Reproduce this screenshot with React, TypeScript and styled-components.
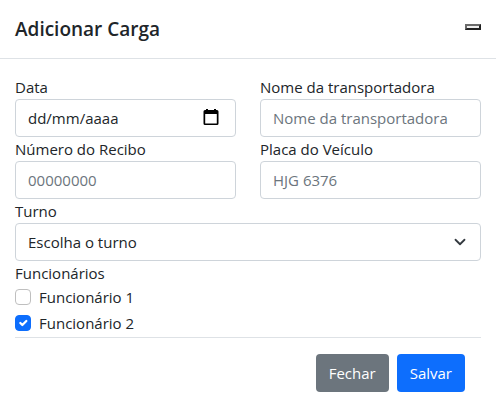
import React, { useState } from "react";
import styled, { createGlobalStyle, css } from "styled-components";

const GlobalStyle = createGlobalStyle`
  *, *::before, *::after { box-sizing: border-box; }
  body {
    margin: 0;
    background: #fff;
    color: #212529;
    font-family: "Open Sans", "Noto Sans", sans-serif;
    font-size: 15px;
    line-height: 24px;
  }
  button, input, select { font: inherit; color: inherit; margin: 0; }
`;

const Header = styled.header`
  display: flex;
  align-items: center;
  justify-content: space-between;
  padding: 14px 15px;
  border-bottom: 1px solid #dee2e6;
`;

const Title = styled.h5`
  margin: 0;
  font-size: 19px;
  font-weight: 600;
  line-height: 30px;
`;

const CloseButton = styled.button`
  width: 16px;
  height: 6px;
  padding: 0;
  background: #efefef;
  border: 2px solid;
  border-color: #6b6b6b #212121 #212121 #6b6b6b;
  margin-bottom: 4px;
`;

const Form = styled.form`
  padding: 16px 15px;
`;

const Fields = styled.div`
  display: grid;
  grid-template-columns: 1fr 1fr;
  column-gap: 24px;
`;

const Field = styled.div<{ $wide?: boolean }>`
  display: flex;
  flex-direction: column;
  min-width: 0;
  ${(p) => p.$wide && "grid-column: 1 / -1;"}
`;

const control = css`
  width: 100%;
  height: 38px;
  padding: 6px 12px;
  background: #fff;
  border: 1px solid #ced4da;
  border-radius: 4px;
  outline: none;
  &:focus-visible { border-color: #86b7fe; }
`;

const Input = styled.input<{ $dark?: boolean }>`
  ${control}
  &::placeholder { color: ${(p) => (p.$dark ? "#212529" : "#6c757d")}; opacity: 1; }
`;

const Select = styled.select`
  ${control}
  appearance: none;
`;

const ControlWrap = styled.div`
  display: grid;
  align-items: center;
  & > * { grid-area: 1 / 1; }
`;

const PickerButton = styled.button`
  display: flex;
  justify-self: end;
  padding: 0;
  margin-right: 16px;
  margin-bottom: 2px;
  background: none;
  border: 0;
`;

const Chevron = styled.svg`
  justify-self: end;
  margin-right: 13px;
  pointer-events: none;
`;

const Group = styled.fieldset`
  margin: 0;
  padding: 0;
  border: 0;
`;

const Legend = styled.legend`
  padding: 0;
`;

const Check = styled.div`
  display: flex;
  align-items: center;
  gap: 8px;
  margin-bottom: 2px;
`;

const Tick = styled.input`
  appearance: none;
  width: 16px;
  height: 16px;
  border: 1px solid #bfbfbf;
  border-radius: 4px;
  background: #fff;
  &:checked { background: #0d6efd; border-color: #0d6efd; }
`;

const TickBox = styled.span`
  display: grid;
  & > * { grid-area: 1 / 1; }
  & > svg { pointer-events: none; }
`;

const Footer = styled.footer`
  display: flex;
  justify-content: flex-end;
  gap: 8px;
  padding: 16px;
  border-top: 1px solid #dee2e6;
`;

const Button = styled.button<{ $primary?: boolean }>`
  height: 38px;
  padding: 6px 13px;
  color: #fff;
  background: ${(p) => (p.$primary ? "#0d6efd" : "#6c757d")};
  border: 0;
  border-radius: 4px;
`;

function CheckItem({ id, label, initial }: { id: string; label: string; initial: boolean }) {
  const [on, setOn] = useState(initial);
  return (
    <Check>
      <TickBox>
        <Tick id={id} type="checkbox" checked={on} onChange={() => setOn(!on)} />
        {on && (
          <svg width="16" height="16" viewBox="-2 -2 24 24" aria-hidden="true">
            <path d="M6 10l3 3 6-6" fill="none" stroke="#fff" strokeWidth="3.4" strokeLinecap="round" strokeLinejoin="round" />
          </svg>
        )}
      </TickBox>
      <label htmlFor={id}>{label}</label>
    </Check>
  );
}

export default function App() {
  return (
    <>
      <GlobalStyle />
      <Header>
        <Title>Adicionar Carga</Title>
        <CloseButton type="button" aria-label="Fechar janela" />
      </Header>
      <Form onSubmit={(e) => e.preventDefault()}>
        <Fields>
          <Field>
            <label htmlFor="data">Data</label>
            <ControlWrap>
              <Input id="data" $dark inputMode="numeric" placeholder="dd/mm/aaaa" />
              <PickerButton type="button" aria-label="Abrir calendário">
                <svg width="18" height="18" viewBox="0 0 18 18" aria-hidden="true">
                  <path d="M4 1h2v1h6V1h2v1h1q1.500 0 1.500 1.500v12q0 1.500-1.500 1.500H3q-1.500 0-1.500-1.500v-12Q1.500 2 3 2h1zM3.200 6v9.500h11.600V6z" fillRule="evenodd" />
                </svg>
              </PickerButton>
            </ControlWrap>
          </Field>
          <Field>
            <label htmlFor="nome">Nome da transportadora</label>
            <Input id="nome" placeholder="Nome da transportadora" />
          </Field>
          <Field>
            <label htmlFor="recibo">Número do Recibo</label>
            <Input id="recibo" placeholder="00000000" />
          </Field>
          <Field>
            <label htmlFor="placa">Placa do Veículo</label>
            <Input id="placa" placeholder="HJG 6376" />
          </Field>
          <Field $wide>
            <label htmlFor="turno">Turno</label>
            <ControlWrap>
              <Select id="turno" defaultValue="">
                <option value="">Escolha o turno</option>
              </Select>
              <Chevron width="16" height="12" viewBox="0 0 16 16" aria-hidden="true">
                <path d="M2 5l6 6 6-6" fill="none" stroke="#343a40" strokeWidth="2.400" strokeLinecap="round" strokeLinejoin="round" />
              </Chevron>
            </ControlWrap>
          </Field>
        </Fields>
        <Group>
          <Legend>Funcionários</Legend>
          <CheckItem id="func1" label="Funcionário 1" initial={false} />
          <CheckItem id="func2" label="Funcionário 2" initial />
        </Group>
        <Footer>
          <Button type="button">Fechar</Button>
          <Button type="submit" $primary>Salvar</Button>
        </Footer>
      </Form>
    </>
  );
}
